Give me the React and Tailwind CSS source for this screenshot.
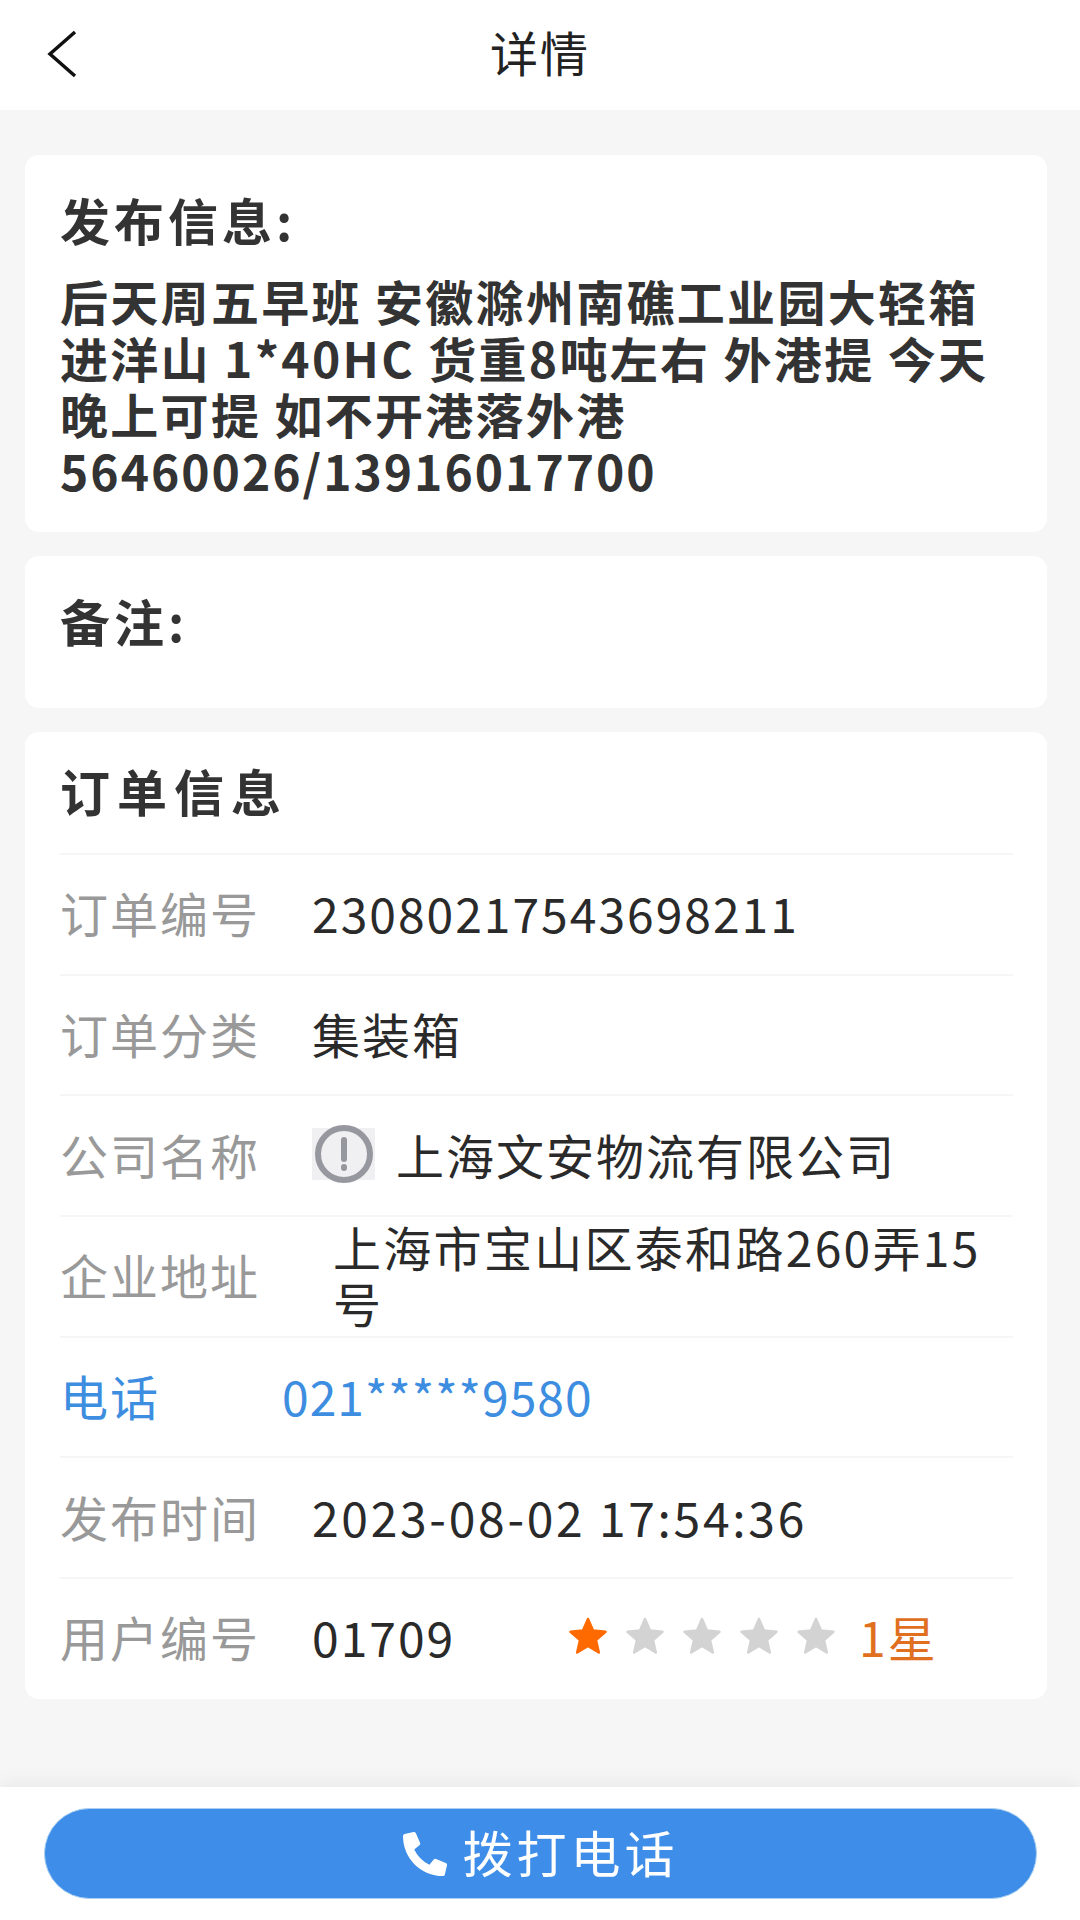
import React from 'react';
import { FaPhoneAlt } from 'react-icons/fa';

const Star = ({ active }) => (
  <svg viewBox="0 0 40 40" className={active ? 'w-10 h-10 fill-[#ff6a00] stroke-[#ff6a00]' : 'w-10 h-10 fill-[#d3d3d3] stroke-[#d3d3d3]'} strokeWidth="2.5" strokeLinejoin="round">
    <path d="M20 3 L25 14.500 L37.500 15.700 L28 24 L30.800 36.500 L20 30 L9.200 36.500 L12 24 L2.500 15.700 L15 14.500 Z" />
  </svg>
);

const Row = ({ label, children, blue }) => (
  <div className="flex items-center h-[120.700px] pb-1 border-t-2 border-[#f6f6f6]">
    <span className={blue ? 'w-[222px] shrink-0 text-[#3d8de0]' : 'w-[252px] shrink-0 text-[#999999]'}>{label}</span>
    {children}
  </div>
);

const App = () => {
  return (
    <div className="flex flex-col h-[1920px] bg-[#f6f6f6] font-['Noto_Sans_CJK_SC','Noto_Sans',sans-serif] overflow-hidden">
      {/* 顶部 */}
      <header className="relative flex items-center justify-center h-[110px] pb-2 bg-white shrink-0">
        <svg viewBox="0 0 32 48" className="absolute left-[46px] top-[30px] w-8 h-12 fill-none stroke-[#111111]" strokeWidth="3.500">
          <polyline points="29,2 4,24 29,46" />
        </svg>
        <h1 className="text-[48px] leading-none tracking-[2px] text-[#222222]">详情</h1>
      </header>

      <main className="flex-1 flex flex-col gap-6 pl-[25px] pt-[45px] pr-[33px]">
        <section className="bg-white rounded-[14px] h-[377px] pl-[35px] pt-[36px]">
          <h2 className="text-[50px] leading-[56px] font-bold tracking-[4px] text-[#333333]">发布信息:</h2>
          <p className="mt-[25px] text-[48px] leading-[56.500px] font-bold tracking-[2.300px] text-[#333333] w-[970px] whitespace-nowrap">
            后天周五早班 安徽滁州南礁工业园大轻箱<br />
            进洋山 1*40HC 货重8吨左右 外港提 今天<br />
            晚上可提 如不开港落外港<br />
            <span className="tracking-[2px]">56460026/13916017700</span>
          </p>
        </section>

        <section className="bg-white rounded-[14px] h-[152px] pl-[35px] pt-[36px]">
          <h2 className="text-[50px] leading-[56px] font-bold tracking-[4px] text-[#333333]">备注:</h2>
        </section>

        <section className="bg-white rounded-[14px] h-[967px] pl-[35px] pr-[34px] text-[48px] tracking-[2px] text-[#2a2a2a]">
          <div className="h-[121px] flex items-center pb-1">
            <h2 className="text-[50px] font-bold tracking-[7px] text-[#333333]">订单信息</h2>
          </div>
          <Row label="订单编号"><span>23080217543698211</span></Row>
          <Row label="订单分类"><span>集装箱</span></Row>
          <Row label="公司名称">
            <span className="flex items-center justify-center w-[63px] h-[52px] bg-[#f0f0f2] mr-[21px]">
              <svg viewBox="0 0 60 60" className="w-[60px] h-[60px] -my-1 fill-none stroke-[#97979f]" strokeWidth="6">
                <circle cx="30" cy="30" r="26" />
                <line x1="30" y1="16" x2="30" y2="35" strokeLinecap="round" />
                <line x1="30" y1="43" x2="30" y2="44" strokeLinecap="round" />
              </svg>
            </span>
            <span>上海文安物流有限公司</span>
          </Row>
          <Row label="企业地址">
            <span className="ml-[21px] w-[690px] leading-[56px] tracking-[2.300px]">上海市宝山区泰和路260弄15<br />号</span>
          </Row>
          <Row label="电话" blue><span className="text-[#3d8de0] tracking-[1px]">021*****9580</span></Row>
          <Row label="发布时间"><span className="tracking-[2.700px]">2023-08-02 17:54:36</span></Row>
          <Row label="用户编号">
            <span className="w-[256px]">01709</span>
            <div className="flex gap-[17px] mr-[23px]">
              <Star active />
              <Star />
              <Star />
              <Star />
              <Star />
            </div>
            <span className="text-[#e0701f]">1星</span>
          </Row>
        </section>
      </main>

      {/* 底部按钮 */}
      <footer className="h-[133px] shrink-0 bg-white pt-[21px] px-[44px] shadow-[0_-6px_18px_rgba(0,0,0,0.05)]">
        <button className="flex items-center justify-center gap-[16px] w-[993px] h-[91px] pb-1 rounded-full bg-[#3d8de9] text-white text-[50px] tracking-[4px] border border-[#a9d0f0]">
          <FaPhoneAlt className="w-[44px] h-[44px] mt-1" />
          拨打电话
        </button>
      </footer>
    </div>
  );
};

export default App;
